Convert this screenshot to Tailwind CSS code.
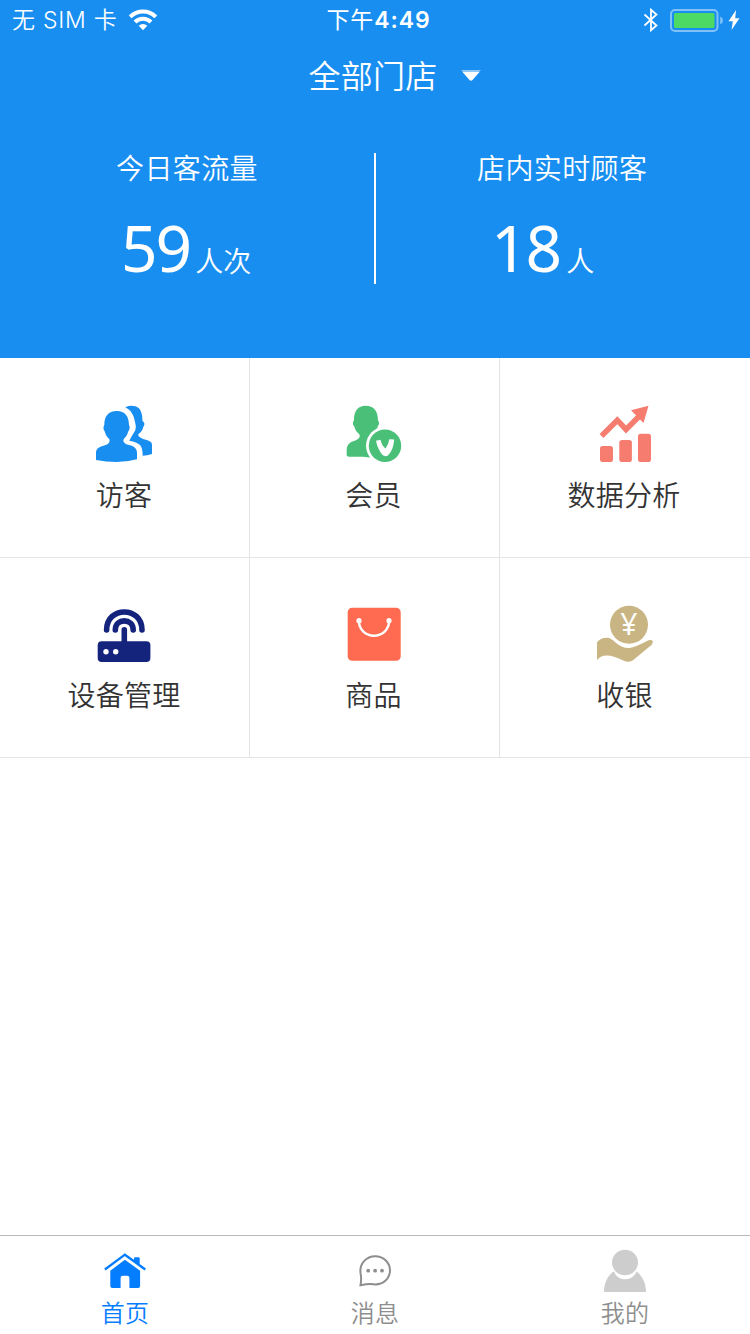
<!DOCTYPE html>
<html lang="zh-CN">
<head>
    <meta charset="UTF-8">
    <meta name="viewport" content="width=device-width, initial-scale=1.0">
    <title>首页</title>
    <script src="https://cdn.jsdelivr.net/npm/@tailwindcss/browser@4"></script>
</head>
<body class="bg-white font-['Noto_Sans_CJK_SC_DemiLight','Noto_Sans_CJK_SC',sans-serif] font-[350]">
    <div class="flex flex-col w-[750px] h-[1334px] overflow-hidden">

        <header class="h-[358px] shrink-0 bg-[#188ef1] text-white">
            <!-- status bar -->
            <div class="grid grid-cols-[1fr_auto_1fr] items-center h-10 pl-3 pr-[10px]">
                <div class="flex items-center">
                    <span class="text-[23px] leading-[38px] tracking-[0.75px] font-['Inter','Noto_Sans_CJK_SC_DemiLight','Noto_Sans_CJK_SC',sans-serif] whitespace-nowrap">无 SIM 卡</span>
                    <svg class="ml-[11px] w-[30px] h-[22px]" viewBox="0 0 30 22" fill="none" stroke="#fff" stroke-width="4">
                        <path d="M2.200 7.800a18 18 0 0 1 25.600 0"/>
                        <path d="M7 13a11.300 11.300 0 0 1 16 0"/>
                        <path d="M15 21.200l-4.300-4.400a6.300 6.300 0 0 1 8.600 0z" fill="#fff" stroke="none"/>
                    </svg>
                </div>
                <span class="text-[23px] leading-[38px] tracking-[0.9px] font-normal font-['Inter','Noto_Sans_CJK_SC',sans-serif] pl-[5px]">下午<span class="font-semibold">4:49</span></span>
                <div class="flex items-center justify-end">
                    <svg class="w-4 h-6 mr-[11px]" viewBox="0 0 16 24" fill="none" stroke="#fff" stroke-width="1.800">
                        <path d="M1.500 6.500l12 11L8 22.300V1.700l5.500 4.800-12 11"/>
                    </svg>
                    <svg class="w-[54px] h-6" viewBox="0 0 54 24">
                        <rect x="1" y="2" width="46.500" height="21" rx="4" fill="none" stroke="#fff" stroke-opacity=".45" stroke-width="2"/>
                        <rect x="4" y="5" width="40.500" height="15" rx="1.500" fill="#4cd964"/>
                        <path d="M50.200 8.500q2.800 1.200 2.800 4t-2.800 4z" fill="#fff" fill-opacity=".45"/>
                    </svg>
                    <svg class="w-3 h-5 ml-1" viewBox="0 0 12 20" fill="#fff"><path d="M8 0L.5 11.300h4.300L3.500 20 11.500 8.200H7.200z"/></svg>
                </div>
            </div>

            <!-- store picker -->
            <div class="flex items-center justify-center h-[68px] pl-[40px]">
                <span class="text-[32px] leading-[46px] tracking-[0.2px]">全部门店</span>
                <svg class="ml-6 w-5 h-3 mt-1" viewBox="0 0 20 12" fill="#fff">
                    <path d="M0 0h20l-2 2H2z" fill-opacity=".5"/>
                    <path d="M1.500 2h17L11.500 10q-1.500 1.500-3 0z"/>
                </svg>
            </div>

            <!-- live numbers -->
            <div class="flex pt-[38px]">
                <div class="w-[374px] pl-[116px]">
                    <p class="text-[28px] leading-[40px] mt-px tracking-[0.4px]">今日客流量</p>
                    <p class="flex items-baseline mt-[17px] pl-[5px]">
                        <span class="text-[64px] leading-[88px] font-normal tracking-[-2px] font-['Noto_Sans',sans-serif]">59</span>
                        <span class="ml-[5px] text-[28px]">人次</span>
                    </p>
                </div>
                <div class="w-[2px] h-[131px] mt-[7px] bg-white"></div>
                <div class="pl-[101px]">
                    <p class="text-[28px] leading-[40px] mt-px tracking-[0.4px]">店内实时顾客</p>
                    <p class="flex items-baseline mt-[17px] pl-[14px]">
                        <span class="text-[64px] leading-[88px] font-normal tracking-[-2px] font-['Noto_Sans',sans-serif]">18</span>
                        <span class="ml-[6px] text-[28px]">人</span>
                    </p>
                </div>
            </div>
        </header>

        <!-- feature grid -->
        <main class="grid grid-cols-3 auto-rows-[200px] text-[28px] leading-[40px] tracking-[0.3px] text-[#333]">
            <a class="flex flex-col items-center pt-[46px] pr-px border-r border-b border-[#e4e4e4]">
                <svg class="w-[60px] h-[60px]" viewBox="0 0 60 60" fill="#188ef1">
                    <path d="M22.700 7C14.500 7 10.300 12 10.300 21 9 23 9.300 25.500 10.800 27.500 11.800 31.500 13.500 33.500 15.300 35 16.500 39 13.500 40.700 9.500 41.800 4 43.300 2 45.500 2 49V56Q12 58 22.700 58T43 55.300V49C43 45 41 42.800 36 41.300 30.500 40 28 37.500 30 34.700 32.300 32.500 33.500 30.500 34.200 27.500 35.800 25.500 36.200 23 35 21 34.800 12 31 7 22.700 7z"/>
                    <path d="M31.300 3.200C36 1 41.500 1.500 44.500 4 47.500 6.500 48.300 11 48.500 17 50.800 18.500 51 20.500 49.500 22.500 48.500 26 47 28.500 44.500 30 43.500 32 46 33.700 50 35.300 58 37.500 58 39 58 42V50Q53 51.500 48.700 51.700 48.700 44 46 41 43 38 35.300 36.700 38 31.500 40 28.500C42 26 42.300 22 41.200 19 40 11 37 6 31.300 3.200z"/>
                </svg>
                <span class="mt-[10px]">访客</span>
            </a>
            <a class="flex flex-col items-center pt-[46px] border-r border-b border-[#e4e4e4]">
                <svg class="w-[60px] h-[60px]" viewBox="0 0 60 60">
                    <path fill="#4abf78" d="M20.700 1.700C13 1.700 9 6.500 8.900 16.500 7.300 18.500 7.600 21 9.300 22.500 10.500 26.500 12 28.500 14.200 30 16 34 13 35.500 8 37.300 3 39.300 1.700 42 1.700 47V51Q1.700 52.700 4 52.700H18L24 53.400 36 50V28L31.300 26C32.500 25 32.500 23.500 32.800 22 34.500 20.500 34.500 18 33 16.500 33 6.500 28.500 1.700 20.700 1.700z"/>
                    <circle cx="40" cy="41.700" r="19" fill="#fff"/>
                    <circle cx="40" cy="41.700" r="16.200" fill="#4abf78"/>
                    <path d="M31 36.700L35.500 35.700Q37 42 40.500 44.500 43.500 41 44.300 35.200L49.200 35.500Q48.500 46 43 51.500 40 53 37.500 51 32.500 45 31 36.700z" fill="#fff"/>
                </svg>
                <span class="mt-[10px] pr-[2px]">会员</span>
            </a>
            <a class="flex flex-col items-center pt-[46px] border-b border-[#e4e4e4]">
                <svg class="w-[60px] h-[60px]" viewBox="0 0 60 60" fill="#f67c6f">
                    <path d="M6.500 32L22.300 16.200 31 25.500 45.500 11" fill="none" stroke="#f67c6f" stroke-width="5.500"/>
                    <path d="M53.500 1.800L36 6.300 48.500 19z"/>
                    <rect x="5" y="42" width="13" height="16" rx="2.800"/>
                    <rect x="24.300" y="36" width="12.600" height="22" rx="2.800"/>
                    <rect x="43" y="29.700" width="13" height="28.300" rx="2.800"/>
                </svg>
                <span class="mt-[10px] pr-[2px]">数据分析</span>
            </a>
            <a class="flex flex-col items-center pt-[46px] pr-px border-r border-b border-[#e4e4e4]">
                <svg class="w-[60px] h-[60px]" viewBox="0 0 60 60" fill="none" stroke="#14247d" stroke-width="5.600" stroke-linecap="round">
                    <path d="M12.600 26C12.600 1.900 48 1.900 48 26"/>
                    <path d="M21.300 26C21.300 13.800 39.200 13.800 39.200 26"/>
                    <path d="M30.300 25.800V38"/>
                    <rect x="3.700" y="37.300" width="52.700" height="20.700" rx="4" fill="#14247d" stroke="none"/>
                    <circle cx="12" cy="47.700" r="2.700" fill="#fff" stroke="none"/>
                    <circle cx="21.700" cy="47.700" r="2.700" fill="#fff" stroke="none"/>
                </svg>
                <span class="mt-[10px]">设备管理</span>
            </a>
            <a class="flex flex-col items-center pt-[46px] border-r border-b border-[#e4e4e4]">
                <svg class="w-[60px] h-[60px]" viewBox="0 0 60 60">
                    <rect x="2.700" y="3.700" width="53" height="53" rx="4.500" fill="#ff6b51"/>
                    <path d="M14 17.500a15 14.200 0 0 0 30 0" fill="none" stroke="#fff" stroke-width="2.400"/>
                    <circle cx="14" cy="16.700" r="2.600" fill="#fff"/>
                    <circle cx="44" cy="16.700" r="2.600" fill="#fff"/>
                </svg>
                <span class="mt-[10px] pr-[2px]">商品</span>
            </a>
            <a class="flex flex-col items-center pt-[46px] pr-px border-b border-[#e4e4e4]">
                <svg class="w-[60px] h-[60px]" viewBox="0 0 60 60" fill="#c9b584">
                    <circle cx="34" cy="20.700" r="19"/>
                    <path d="M2 38.200Q6 33.700 12 33.800 16 34 20 38 27 44.500 34.500 44 40 43.500 53.500 36.300 57.500 35 58 38 57.500 40.500 54 43L38 56.200Q33.500 59 29.500 57 17 51.500 12 51.600 6 51.500 2 56z"/>
                    <text x="34" y="31" text-anchor="middle" font-family="Noto Sans, sans-serif" font-size="30" font-weight="400" fill="#fff">¥</text>
                </svg>
                <span class="mt-[10px]">收银</span>
            </a>
        </main>

        <!-- tab bar -->
        <nav class="grid grid-cols-3 h-[99px] mt-auto pt-[9px] border-t border-[#b9b9b9] text-[24px] leading-[34px] tracking-[0.3px] text-[#8e8e8e]">
            <a class="flex flex-col items-center text-[#057dff]">
                <svg class="w-[50px] h-[50px]" viewBox="0 0 50 50" fill="currentColor">
                    <path d="M4.900 24.500L24.900 9.700 45.300 24.500" fill="none" stroke="currentColor" stroke-width="2.300"/>
                    <path d="M34 13.500q0-1.200 1.200-1.200h3.300q1.200 0 1.200 1.200v6.700L34 16z"/>
                    <path d="M24.900 14.700L40.100 25.700V41q0 2-2 2h-8.700V33q0-2.300-2.300-2.300h-4.200q-2.300 0-2.300 2.300v10h-8.300q-2 0-2-2V25.700z"/>
                </svg>
                <span>首页</span>
            </a>
            <a class="flex flex-col items-center">
                <svg class="w-[50px] h-[50px]" viewBox="0 0 50 50" fill="#8e8e8e">
                    <path d="M10.500 40.300Q11.700 34 10.600 28.500C9 18.500 16.500 11.200 25.300 11.200 33.700 11.200 40 17.700 40 25.500 40 33 33.800 39.400 25.300 39.400 20 38.500 15.500 39.200 10.500 40.300z" fill="none" stroke="#8e8e8e" stroke-width="2"/>
                    <circle cx="18.200" cy="25.700" r="1.900"/>
                    <circle cx="25.100" cy="25.700" r="1.900"/>
                    <circle cx="32" cy="25.700" r="1.900"/>
                </svg>
                <span>消息</span>
            </a>
            <a class="flex flex-col items-center">
                <svg class="w-[50px] h-[50px]" viewBox="0 0 50 50" fill="#cdcdcd">
                    <ellipse cx="25" cy="17.500" rx="13" ry="12.700"/>
                    <path d="M13.700 26.200C16 31.500 20 34.300 25 34.300S34.500 31.500 36.700 26.500C43 31.500 46 39 46 47H4C4 39 7 31 13.700 26.200z"/>
                </svg>
                <span>我的</span>
            </a>
        </nav>
    </div>
</body>
</html>
